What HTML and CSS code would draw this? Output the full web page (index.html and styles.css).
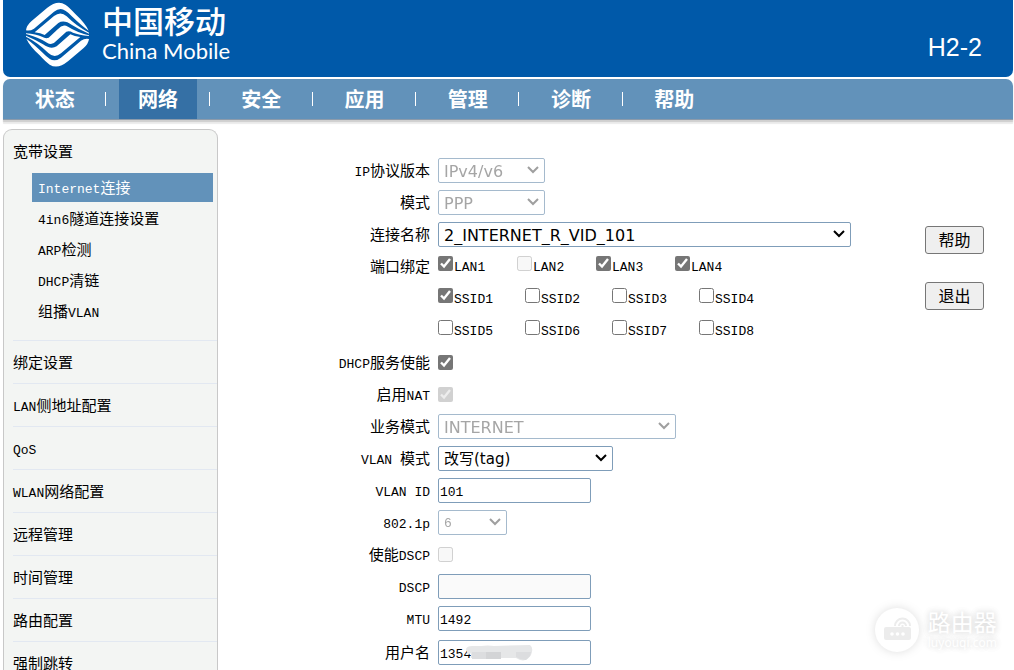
FILE: index.html
```html
<!DOCTYPE html>
<html lang="zh-CN">
<head>
<meta charset="utf-8">
<title>中国移动 H2-2</title>
<link rel="stylesheet" href="styles.css">
</head>
<body>
<div class="page">
  <header class="banner">
    <div class="brand">
      <svg class="brand-mark" viewBox="0 0 216 210" aria-hidden="true">
        <g id="half" fill="#fff">
          <path d="M12 91 Q14 76 28 64 L75 24 Q106 -1 130 14 Q142 22 160 42 Q190 70 200 92 Q178 76 151 50 Q129 27 116 27 Q106 27 96 35 L36 86 Q24 94 12 91Z"/>
          <path d="M38 97 L96 48 Q116 32 134 49 Q165 80 201 98 L201 101 Q170 88 150 75 Q126 58 109 69 L68 105 Q56 99 38 97Z"/>
        </g>
        <use href="#half" transform="rotate(180 106.500 104)"/>
        <path fill="#fff" d="M12 100 Q42 103 60 110 Q71 117 80 113 L108 87 Q122 70 138 80 Q165 97 201 106 L201 108 Q171 105 153 98 Q142 91 133 95 L105 121 Q91 138 75 128 Q48 111 12 102Z"/>
      </svg>
      <div class="brand-text">
        <span class="brand-cn">中国移动</span>
        <span class="brand-en">China Mobile</span>
      </div>
    </div>
    <span class="model">H2-2</span>
  </header>

  <nav class="nav">
    <ul class="nav-list">
      <li><a href="#">状态</a></li>
      <li><a href="#" class="current">网络</a></li>
      <li><a href="#">安全</a></li>
      <li><a href="#">应用</a></li>
      <li><a href="#">管理</a></li>
      <li><a href="#">诊断</a></li>
      <li><a href="#">帮助</a></li>
    </ul>
  </nav>

  <div class="body">
    <aside class="sidebar">
      <ul class="menu">
        <li><a href="#">宽带设置</a>
          <ul class="submenu">
            <li><a href="#" class="current"><span class="lat">Internet</span>连接</a></li>
            <li><a href="#"><span class="lat">4in6</span>隧道连接设置</a></li>
            <li><a href="#"><span class="lat">ARP</span>检测</a></li>
            <li><a href="#"><span class="lat">DHCP</span>清链</a></li>
            <li><a href="#">组播<span class="lat">VLAN</span></a></li>
          </ul>
        </li>
        <li><a href="#">绑定设置</a></li>
        <li><a href="#"><span class="lat">LAN</span>侧地址配置</a></li>
        <li><a href="#"><span class="lat">QoS</span></a></li>
        <li><a href="#"><span class="lat">WLAN</span>网络配置</a></li>
        <li><a href="#">远程管理</a></li>
        <li><a href="#">时间管理</a></li>
        <li><a href="#">路由配置</a></li>
        <li><a href="#">强制跳转</a></li>
      </ul>
    </aside>

    <main class="main">
      <form class="form">
        <label for="ipver"><span class="lat">IP</span>协议版本</label>
        <div><select id="ipver" class="w-s" disabled><option>IPv4/v6</option></select></div>

        <label for="mode">模式</label>
        <div><select id="mode" class="w-s" disabled><option>PPP</option></select></div>

        <label for="conn">连接名称</label>
        <div><select id="conn" class="w-xl"><option>2_INTERNET_R_VID_101</option></select></div>

        <span class="caption">端口绑定</span>
        <div class="ports lan">
          <label><input type="checkbox" checked><span class="lat">LAN1</span></label>
          <label><input type="checkbox" disabled><span class="lat">LAN2</span></label>
          <label><input type="checkbox" checked><span class="lat">LAN3</span></label>
          <label><input type="checkbox" checked><span class="lat">LAN4</span></label>
        </div>

        <div class="ports ssid">
          <label><input type="checkbox" checked><span class="lat">SSID1</span></label>
          <label><input type="checkbox"><span class="lat">SSID2</span></label>
          <label><input type="checkbox"><span class="lat">SSID3</span></label>
          <label><input type="checkbox"><span class="lat">SSID4</span></label>
        </div>
        <div class="ports ssid">
          <label><input type="checkbox"><span class="lat">SSID5</span></label>
          <label><input type="checkbox"><span class="lat">SSID6</span></label>
          <label><input type="checkbox"><span class="lat">SSID7</span></label>
          <label><input type="checkbox"><span class="lat">SSID8</span></label>
        </div>

        <label for="dhcp"><span class="lat">DHCP</span>服务使能</label>
        <div><input id="dhcp" type="checkbox" checked></div>

        <label for="nat">启用<span class="lat">NAT</span></label>
        <div><input id="nat" type="checkbox" checked disabled></div>

        <label for="service">业务模式</label>
        <div><select id="service" class="w-l" disabled><option>INTERNET</option></select></div>

        <label for="vmode"><span class="lat">VLAN </span>模式</label>
        <div><select id="vmode" class="w-m"><option>改写(tag)</option></select></div>

        <label for="vid"><span class="lat">VLAN ID</span></label>
        <div><input id="vid" class="text" type="text" value="101"></div>

        <label for="prio"><span class="lat">802.1p</span></label>
        <div><select id="prio" class="w-xs lat" disabled><option>6</option></select></div>

        <label for="endscp">使能<span class="lat">DSCP</span></label>
        <div><input id="endscp" type="checkbox" disabled></div>

        <label for="dscp"><span class="lat">DSCP</span></label>
        <div><input id="dscp" class="text" type="text" disabled></div>

        <label for="mtu"><span class="lat">MTU</span></label>
        <div><input id="mtu" class="text" type="text" value="1492"></div>

        <label for="user">用户名</label>
        <div class="masked">
          <input id="user" class="text" type="text" value="1354">
          <svg class="mask" viewBox="0 0 67 17" aria-hidden="true">
            <path fill="#e6e7e8" d="M0 4Q1 1 6 1H15Q22 0 28 1L64 0Q68 3 65 10Q61 17 54 15L50 13H5V8L2 10Z"/>
            <path fill="#dcdddf" d="M6 7H20V14H6ZM50 7H65L64 11L60 15L54 14L50 12Z"/>
            <path fill="#d3d4d6" d="M20 7H35V14H20Z"/>
          </svg>
        </div>
      </form>

      <div class="actions">
        <button type="button">帮助</button>
        <button type="button">退出</button>
      </div>
    </main>
  </div>

  <div class="watermark">
    <svg class="watermark-icon" viewBox="0 0 44 44" aria-hidden="true">
      <circle cx="22" cy="22" r="22" fill="#fff"/>
      <rect x="9" y="19" width="27" height="13" rx="2" fill="#ececec"/>
      <g fill="none" stroke="#ececec" stroke-width="2">
        <path d="M20 18a7.500 7.500 0 0 1 15 0M24 18a3.500 3.500 0 0 1 7 0" />
        <path d="M27.500 17v3"/>
      </g>
      <g fill="#fff"><circle cx="17" cy="26" r="1.800"/><circle cx="22.500" cy="26" r="1.800"/><circle cx="28" cy="26" r="1.800"/></g>
    </svg>
    <div class="watermark-text">
      <span class="watermark-cn">路由器</span>
      <span class="watermark-en">luyouqi.com</span>
    </div>
  </div>
</div>
</body>
</html>
```
FILE: styles.css
```css
* { box-sizing: border-box; }

body {
  margin: 0;
  background: #fff;
  color: #000;
  font: 15px/20px "Noto Sans CJK SC", sans-serif;
}

ul { list-style: none; margin: 0; padding: 0; }
a { color: inherit; text-decoration: none; }

.lat {
  font-family: "Liberation Mono", monospace;
  font-size: 13px;
  line-height: 16px;
  white-space: pre;
}

.page {
  position: relative;
  display: flex;
  flex-direction: column;
  height: 100vh;
  padding: 0 1px 0 3px;
  overflow: hidden;
}

/* Banner */
.banner {
  display: flex;
  flex: none;
  justify-content: space-between;
  height: 77px;
  padding: 0 31px 0 19px;
  border-radius: 0 0 7px 7px;
  background: #0059a9;
  color: #fff;
}

.brand { display: flex; gap: 8px; }
.brand-mark { width: 72px; height: 70px; }
.brand-text { display: flex; flex-direction: column; }
.brand-cn { font-size: 31px; line-height: 38px; padding-top: 1px; font-weight: 500; }
.brand-en { font: 22px/24px Lato, sans-serif; }
.model { padding-top: 32px; font: 25px/30px "Liberation Sans", sans-serif; }

/* Main navigation */
.nav {
  flex: none;
  margin-top: 2px;
  border-radius: 7px 7px 0 0;
  border-bottom: 1px solid #8c9bab;
  background: #6292ba;
  box-shadow: 0 2px 1px #cfcfcf, 0 4px 1px #ececec;
}

.nav-list { display: flex; width: 723px; }

.nav-list li {
  display: flex;
  flex: 1;
  align-items: center;
  justify-content: center;
  position: relative;
}

.nav-list li:not(:last-child)::after {
  content: "";
  position: absolute;
  right: 0;
  top: 13px;
  width: 1px;
  height: 14px;
  background: #fff;
}

.nav-list a {
  padding: 0 19px;
  color: #fff;
  font-size: 20px;
  line-height: 40px;
  font-weight: bold;
}

.nav-list .current { background: #3570a5; }

/* Page body */
.body { display: flex; flex: 1; min-height: 0; padding-top: 9px; }

.sidebar {
  flex: none;
  width: 215px;
  overflow: hidden;
  border: 1px solid #c8c8c8;
  border-bottom: 0;
  border-radius: 9px 9px 0 0;
  background: #f3f5f3;
}

.menu { padding-left: 9px; }
.menu > li > a { display: block; height: 42px; line-height: 41px; }
.menu > li + li { border-top: 1px solid #e2e8f1; }

.submenu { padding: 1px 4px 12px 19px; }
.submenu a { display: block; height: 29px; padding-left: 6px; margin-bottom: 2px; line-height: 27px; }
.submenu .current { background: #6292ba; color: #fff; }

.main { display: flex; flex: 1; justify-content: space-between; min-width: 0; padding-right: 29px; }

/* Settings form */
.form {
  display: grid;
  grid-template-columns: 212px auto;
  grid-template-rows: repeat(15, 32px) 36px;
  column-gap: 8px;
  align-items: center;
  align-content: start;
  padding-top: 25px;
}

.form > label, .caption { text-align: right; }
.form > div { display: flex; align-items: center; }

select {
  appearance: none;
  height: 25px;
  padding: 2px 20px 0 5px;
  border: 1px solid #7f9db9;
  border-radius: 2px;
  background: #fff url("data:image/svg+xml,%3Csvg xmlns='http://www.w3.org/2000/svg' width='12' height='8'%3E%3Cpath d='M1 1l5 5 5-5' fill='none' stroke='%23000' stroke-width='2'/%3E%3C/svg%3E") no-repeat right 5px center;
  color: #000;
  font: 16px "DejaVu Sans", "Noto Sans CJK SC", sans-serif;
}

#vmode { font-size: 15px; }

select:disabled {
  color: #808080;
  opacity: 0.7;
  background-image: url("data:image/svg+xml,%3Csvg xmlns='http://www.w3.org/2000/svg' width='12' height='8'%3E%3Cpath d='M1 1l5 5 5-5' fill='none' stroke='%23777' stroke-width='2'/%3E%3C/svg%3E");
}

select.lat { font: 13px "Liberation Mono", monospace; }

.w-xs { width: 69px; }
.w-s { width: 107px; }
.w-m { width: 175px; }
.w-l { width: 238px; }
.w-xl { width: 413px; }

.text {
  width: 153px;
  height: 25px;
  padding: 4px 1px 0;
  border: 1px solid #7f9db9;
  border-radius: 2px;
  font: 13px "Liberation Mono", monospace;
}

.text:disabled { background: #fafafa; }

input[type="checkbox"] {
  width: 15px;
  height: 15px;
  margin: 0;
  accent-color: #767676;
}

.ports { grid-column: 2; }
.ports label { display: flex; gap: 1px; }
.ports .lat { padding-top: 4px; }
.lan label { width: 79px; }
.ssid label { width: 87px; }

.masked { position: relative; }
.mask { position: absolute; left: 28px; top: 5px; width: 67px; height: 17px; }

/* Side buttons */
.actions { display: flex; flex-direction: column; gap: 28px; padding-top: 97px; }

.actions button {
  width: 59px;
  height: 28px;
  padding: 0 0 2px;
  border: 1px solid #767676;
  border-radius: 3px;
  background: #efefef;
  color: #000;
  font: 16px "Noto Sans CJK SC", sans-serif;
}

/* Watermark */
.watermark {
  position: absolute;
  right: 17px;
  bottom: 18px;
  display: flex;
  align-items: center;
  gap: 9px;
  color: #fff;
  pointer-events: none;
}

.watermark-icon { width: 44px; height: 44px; filter: drop-shadow(0 0 5px #dedede); }
.watermark-text { display: flex; flex-direction: column; text-shadow: 0 0 6px #d4d4d4, 0 0 10px #e4e4e4; }
.watermark-cn { font-size: 23px; line-height: 26px; font-weight: 400; }
.watermark-en { font: 12px/18px "Noto Sans", sans-serif; }
```
